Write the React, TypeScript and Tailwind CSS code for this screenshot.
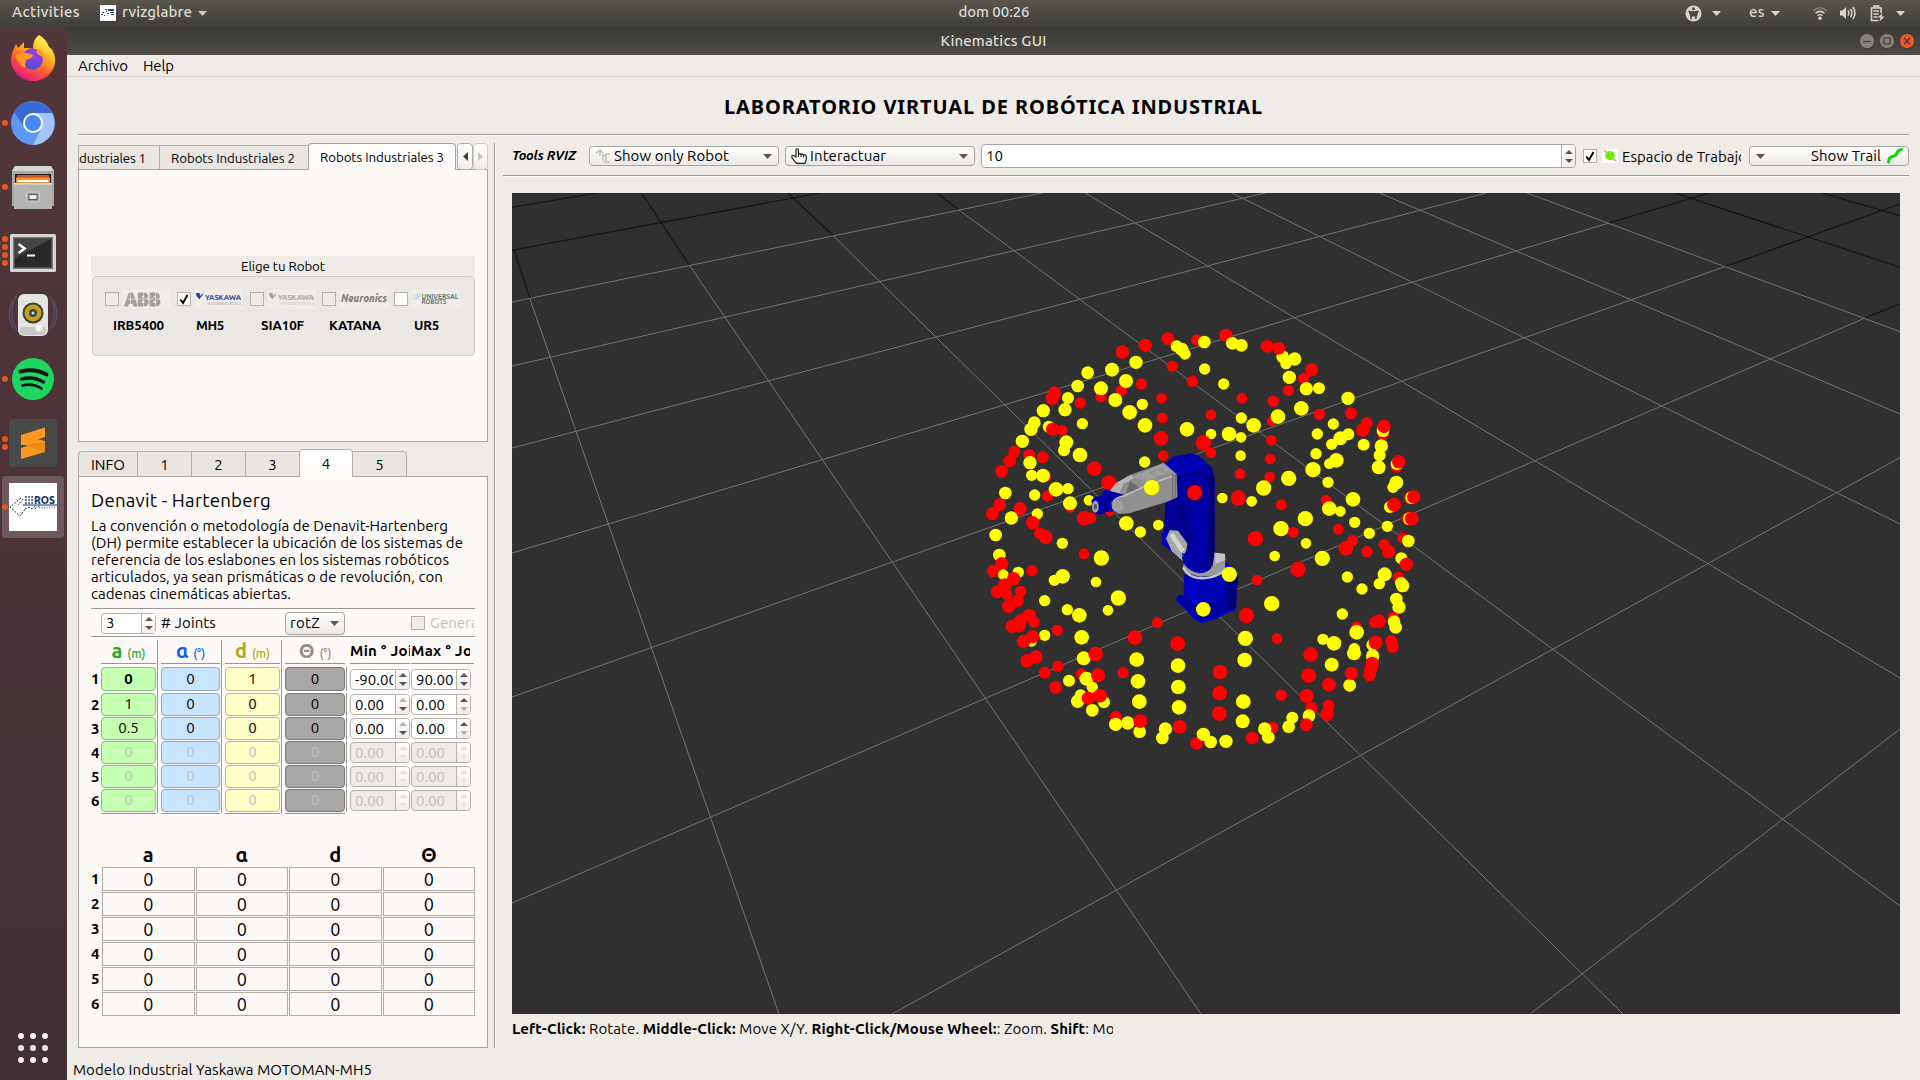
import React, { useLayoutEffect, useRef, useState } from "react";

/* Single line of text whose tracking is computed so that it spans `w` pixels. */
function Fit({ w, className = "", children }: { w: number; className?: string; children: React.ReactNode }) {
  const ref = useRef<HTMLSpanElement>(null);
  const [ls, setLs] = useState(0);
  useLayoutEffect(() => {
    const el = ref.current;
    if (!el) return;
    const n = (el.textContent || "").length;
    if (n > 0) setLs((w - el.getBoundingClientRect().width) / n);
  }, [w]);
  return (
    <span ref={ref} className={"inline-block whitespace-pre " + className} style={{ letterSpacing: ls }}>
      {children}
    </span>
  );
}

function Caret({ className = "" }: { className?: string }) {
  return (
    <svg width="9" height="5" viewBox="0 0 9 5" className={"shrink-0 " + className}>
      <path d="M0 0H9L4.5 5Z" fill="currentColor" />
    </svg>
  );
}

/* ---------- top bars ---------- */

function TopBar() {
  return (
    <header className="grid h-[27px] shrink-0 grid-cols-3 items-center bg-linear-to-b from-[#58554c] to-[#403f3a] pb-[2px] text-[15px] font-medium text-[#dfdbd2]">
      <div className="flex h-full items-center">
        <Fit w={68} className="ml-3">Activities</Fit>
        <svg width="16" height="16" viewBox="0 0 16 16" className="mt-px ml-5 shrink-0">
          <rect width="16" height="16" fill="#fff" />
          <path d="M5 4h2v1H5zM8 4h6v2H8zM10 7h4v1h-4zM6 6h1v1H6zM2 7h2v1H2zM1 9h2v1H1zM4 10h1v1H4zM7 8h2v1H7zM11 9h3v1h-3z" fill="#24446c" />
        </svg>
        <Fit w={70} className="ml-[6px]">rvizglabre</Fit>
        <Caret className="mt-px ml-[6px] text-[#cfccc4]" />
      </div>
      <div className="flex justify-center pl-[68px]">
        <Fit w={71}>dom 00:26</Fit>
      </div>
      <div className="flex h-full items-center justify-end pr-[15px] text-[#d8d5cd]">
        <svg width="17" height="17" viewBox="0 0 17 17" className="mt-px">
          <circle cx="8.5" cy="8.5" r="8" fill="currentColor" />
          <circle cx="8.5" cy="3.8" r="1.5" fill="#4a4840" />
          <path d="M3.5 6.2l3.6.8v3L5.9 14M13.500 6.200l-3.600.8v3l1.200 4M7.100 7h2.800v3.500H7.100z" fill="#4a4840" stroke="#4a4840" strokeWidth="1.300" strokeLinejoin="round" />
        </svg>
        <Caret className="mt-px ml-[10px]" />
        <Fit w={16} className="ml-[28px]">es</Fit>
        <Caret className="mt-px ml-[6px]" />
        <svg width="14" height="14" viewBox="0 0 14 14" className="mt-px ml-[33px]" fill="none" stroke="currentColor" strokeWidth="1.600">
          <path d="M.6 4.600a9 9 0 0 1 12.800 0" opacity=".4" />
          <path d="M2.600 7.200a6.200 6.200 0 0 1 8.800 0M4.600 9.700a3.400 3.400 0 0 1 4.800 0" />
          <circle cx="7" cy="12.200" r="1.700" fill="currentColor" stroke="none" />
        </svg>
        <svg width="16" height="14" viewBox="0 0 16 14" className="mt-px ml-[13px]" fill="none" stroke="currentColor" strokeWidth="1.500">
          <path d="M0 4.500h2.500L6 1v12L2.500 9.500H0z" fill="currentColor" stroke="none" />
          <path d="M8 4.500q1.600 2.500 0 5M10.500 2.800q2.700 4.200 0 8.400M13 1q3.800 6 0 12" />
        </svg>
        <svg width="15" height="17" viewBox="0 0 15 17" className="mt-px ml-[14px]" fill="none" stroke="currentColor" strokeWidth="1.600">
          <path d="M8.500 15.500H1.500V3H11V8M4 2.500V1h4.500v1.500M3.500 6h5.500M3.500 9h5M3.500 12h4" />
          <path d="M12.500 8L7.500 12.500h3L9.500 16.500l5-5h-3z" fill="currentColor" stroke="none" />
        </svg>
        <Caret className="mt-px ml-[11px]" />
      </div>
    </header>
  );
}

function TitleBar() {
  return (
    <div className="grid h-7 shrink-0 grid-cols-3 items-center bg-linear-to-b from-[#3b3a35] to-[#4d4b45] text-[15px] font-medium text-[#dfdbd2]">
      <span />
      <div className="flex justify-center"><Fit w={106}>Kinematics GUI</Fit></div>
      <div className="flex items-center justify-end gap-[4px] pr-[5px]">
        {["min", "max", "close"].map((k) => (
          <svg key={k} width="16" height="16" viewBox="0 0 16 16">
            <circle cx="8" cy="8" r="7.600" fill={k === "close" ? "#e9592c" : "#84827a"} stroke="#33322e" strokeWidth=".8" />
            <path
              d={k === "min" ? "M4.500 8.500h7" : k === "max" ? "M5 5h6v6H5z" : "M5.200 5l5.600 6M10.800 5l-5.600 6"}
              fill="none"
              stroke="#3c3b37"
              strokeWidth="1.200"
            />
          </svg>
        ))}
      </div>
    </div>
  );
}

/* ---------- dock ---------- */

function Firefox() {
  return (
    <svg width="46" height="47" viewBox="0 0 46 47" className="-mt-[3px]">
      <defs>
        <linearGradient id="ff" x1=".8" y1=".1" x2=".3" y2="1">
          <stop offset="0" stopColor="#fff44f" />
          <stop offset=".35" stopColor="#ffb01f" />
          <stop offset=".65" stopColor="#ff5634" />
          <stop offset="1" stopColor="#e31587" />
        </linearGradient>
        <radialGradient id="ffp" cx=".6" cy=".3" r=".8">
          <stop offset="0" stopColor="#a03ff0" />
          <stop offset="1" stopColor="#4a4fc4" />
        </radialGradient>
      </defs>
      <path d="M29 1c7 4 9 9 10 12 3 1 7 8 6 15-1 11-11 19-22 19S1 38 1 26c0-6 2-10 5-16l2 4 6-6 0 6c4 0 7 0 9 1 0-7 2-11 6-14z" fill="url(#ff)" />
      <circle cx="22.500" cy="25" r="10.500" fill="url(#ffp)" />
      <path d="M5 22c5-4 10-4 15-2 2 1 4 0 3 2-2 3-6 3-7 5-1 3-1 5 0 7C10 32 8 27 5 22zM27 15c5 1 9 5 8 11-1-3-4-4-6-5-3-2-3-4-2-6z" fill="#ff9a26" />
    </svg>
  );
}

function Chromium() {
  return (
    <svg width="44" height="44" viewBox="0 0 44 44">
      <circle cx="22" cy="22" r="22" fill="#5f97f3" />
      <path d="M3 11A22 22 0 0 1 41 12H22L12 24z" fill="#3869d4" />
      <path d="M41 12H22l9 14-9 18A22 22 0 0 0 41 12z" fill="#a3c3fb" />
      <circle cx="22" cy="22" r="10" fill="#fff" />
      <circle cx="22" cy="22" r="8" fill="#4587f3" />
    </svg>
  );
}

function Files() {
  return (
    <svg width="42" height="44" viewBox="0 0 42 44">
      <path d="M3 1h36l3 5v35H0V6z" fill="#a9a9a7" />
      <path d="M3 1h36l3 5H0z" fill="#d6d6d4" />
      <path d="M3 9h36v10H3z" fill="#221c18" />
      <path d="M5 10h32v3H5z" fill="#c9551f" />
      <path d="M4 12.500h34V19H4z" fill="#ee9338" />
      <path d="M6 15h30v2H6z" fill="#fff" />
      <path d="M2 18h38v26H2z" fill="#b4b4b2" />
      <path d="M2 18h38v1.500H2z" fill="#dcdcda" />
      <rect x="14.500" y="27" width="13" height="10" rx="1.500" fill="#a2a2a0" stroke="#cfcfcd" strokeWidth="1.200" />
      <rect x="17" y="29.500" width="8" height="5" fill="#eee" stroke="#555" />
    </svg>
  );
}

function Terminal() {
  return (
    <svg width="46" height="38" viewBox="0 0 46 38" className="mt-[3px]">
      <rect width="46" height="38" rx="1.500" fill="#d4d4d2" />
      <rect x="3" y="3" width="40" height="32" fill="#777" />
      <rect x="4.500" y="4.500" width="37" height="29" fill="#282828" />
      <path d="M5 5h36L5 24z" fill="#444" />
      <path d="M8.500 10l6 4.500-6 4.500" stroke="#fff" strokeWidth="2.600" fill="none" />
      <path d="M17 21.500h8" stroke="#fff" strokeWidth="2" />
    </svg>
  );
}

function Speaker() {
  return (
    <svg width="50" height="44" viewBox="0 0 50 44">
      <path d="M8 3q-9 17 1 35M4 8q-6 13 1 27M42 3q9 17-1 35M46 8q6 13-1 27" stroke="#5b6a93" strokeWidth="1.500" fill="none" opacity=".5" />
      <rect x="10" y="1" width="30" height="42" rx="6" fill="#e4e4e2" />
      <rect x="12" y="34" width="26" height="8" rx="3" fill="#c9c9c7" />
      <circle cx="25" cy="20" r="10.500" fill="#3a3c3c" />
      <circle cx="25" cy="20" r="8.500" fill="#c7a016" />
      <circle cx="25" cy="20" r="4" fill="#3e4650" />
      <circle cx="25" cy="20" r="1.500" fill="#ddd" />
      <circle cx="31" cy="35" r="3.500" fill="#f6f6f6" />
    </svg>
  );
}

function Spotify() {
  return (
    <svg width="42" height="42" viewBox="0 0 42 42" fill="none" stroke="#191414" strokeLinecap="round">
      <circle cx="21" cy="21" r="21" fill="#1ed760" stroke="none" />
      <path d="M8.500 13.500q14-3.500 26 3" strokeWidth="4" />
      <path d="M9.500 21q12-3 22 3" strokeWidth="3.300" />
      <path d="M10.500 27.500q10-2.500 19 2.800" strokeWidth="2.700" />
    </svg>
  );
}

function Sublime() {
  return (
    <svg width="48" height="48" viewBox="0 0 48 48">
      <rect width="48" height="48" rx="3" fill="#494949" />
      <path d="M12 29L36 22V33L12 40z" fill="#ff9820" />
      <path d="M12 16L36 24V33L12 25z" fill="#f08a15" />
      <path d="M12 16L36 8.500V18L12 26z" fill="#ff9820" />
      <path d="M12 26l24-3v-1l-12-3z" fill="#ff9820" />
    </svg>
  );
}

function RosLogo() {
  return (
    <svg width="48" height="48" viewBox="0 0 48 48">
      <rect width="48" height="48" fill="#fff" />
      <text x="25" y="20.500" fontSize="10" fontWeight="800" fill="#16365f" textLength="21" lengthAdjust="spacingAndGlyphs">ROS</text>
      <path d="M16 14h8M16 17h8M16 20h8" stroke="#16365f" strokeWidth="1.500" strokeDasharray="1.800 1.300" />
      <path d="M14 22h34" stroke="#16365f" />
      <path d="M12 15L1 24l10 9 5-7M14 16l-5 6M16 26l4-2 3 2 3-3M26 26l4-3" stroke="#16365f" fill="none" strokeDasharray="2 1.400" />
      <path d="M30 24.500h17" stroke="#7d93b3" strokeWidth="2" strokeDasharray="1 1.500" />
    </svg>
  );
}

const dock = [
  { icon: <Firefox />, n: 0 },
  { icon: <Chromium />, n: 1 },
  { icon: <Files />, n: 1 },
  { icon: <Terminal />, n: 4 },
  { icon: <Speaker />, n: 0 },
  { icon: <Spotify />, n: 1 },
  { icon: <Sublime />, n: 2 },
  { icon: <RosLogo />, n: 1 },
];

function Dock() {
  return (
    <nav className="flex w-[67px] shrink-0 flex-col bg-linear-to-b from-[#533639] via-[#4b3338] to-[#3e3034]">
      {dock.map((d, i) => (
        <div key={i} className="flex h-16 items-center">
          <div className={"ml-0.5 flex h-[62px] w-[62px] items-center rounded " + (i === 7 ? "bg-[#6e585d]" : "")}>
            <div className="flex w-[6px] shrink-0 flex-col gap-[2.300px]">
              {Array.from({ length: d.n }, (_, k) => (
                <span key={k} className="h-[6px] w-[6px] rounded-full bg-[#e95420]" />
              ))}
            </div>
            <div className="-ml-px flex w-[52px] shrink-0 justify-center">{d.icon}</div>
          </div>
        </div>
      ))}
      <div className="mt-auto mb-[17px] ml-[18px] grid w-[30px] grid-cols-3 gap-[6px]">
        {Array.from({ length: 9 }, (_, k) => (
          <span key={k} className="h-[6px] w-[6px] rounded-full bg-[#f2f0ee]" />
        ))}
      </div>
    </nav>
  );
}

/* ---------- small widgets ---------- */

function Check({ on = false, white = false }: { on?: boolean; white?: boolean }) {
  return (
    <span className={"flex h-[14px] w-[14px] shrink-0 items-center justify-center border border-[#b5b0ac] " + (on || white ? "bg-white" : "bg-[#efebe7]")}>
      {on && (
        <svg width="10" height="11" viewBox="0 0 10 11">
          <path d="M1.200 5.500L4 9 8.500 1" fill="none" stroke="#000" strokeWidth="2" />
        </svg>
      )}
    </span>
  );
}

function Arrows({ up = "#5a5753", down = "#5a5753" }: { up?: string; down?: string }) {
  return (
    <span className="flex h-full w-[14px] shrink-0 flex-col items-center justify-center gap-[5px] border-l border-[#b5b0ac] bg-linear-to-b from-white to-[#f0eeec]">
      <svg width="8" height="4" viewBox="0 0 8 4"><path d="M0 4h8L4 0z" fill={up} /></svg>
      <svg width="8" height="4" viewBox="0 0 8 4"><path d="M0 0h8L4 4z" fill={down} /></svg>
    </span>
  );
}

function Etched({ className = "" }: { className?: string }) {
  return <div className={"h-[2px] shrink-0 border-t border-[#9a9691] bg-white " + className} />;
}

/* ---------- left: robot chooser ---------- */

function LogoYaskawa({ color, sub }: { color: string; sub: string }) {
  return (
    <svg width="48" height="20" viewBox="0 0 48 20" className="shrink-0">
      <rect width="48" height="20" fill="#f0ece9" />
      <path d="M1 4h3.500l.5 3 3-3-3.500 6.500L1.500 7zM5.500 6.500L8.500 4 6.500 8z" fill={color} />
      <text x="10" y="10.600" fontSize="8" fontWeight="500" fill={color} stroke={color} strokeWidth=".2" textLength="36" lengthAdjust="spacingAndGlyphs">YASKAWA</text>
      <text x="12" y="16" fontSize="3.600" fill={sub} textLength="34" lengthAdjust="spacingAndGlyphs">MOTOMAN ROBOTICS</text>
    </svg>
  );
}

const robots = [
  {
    name: "IRB5400", w: 51, col: "w-[72px]", lab: "pl-[8px]",
    logo: (
      <svg width="48" height="20" viewBox="0 0 48 20" className="shrink-0">
        <rect width="48" height="20" fill="#f0ece9" />
        <text x="1.500" y="17" fontSize="19" fontWeight="900" fill="#a09e9c" stroke="#a09e9c" strokeWidth="1.200" textLength="36" lengthAdjust="spacingAndGlyphs">ABB</text>
        <path d="M0 10h38M7.500 2v16M20.500 2v16M32.500 2v16" stroke="#f0ece9" strokeWidth=".6" />
      </svg>
    ),
  },
  { name: "MH5", w: 28, col: "w-[73px]", lab: "pl-[19px]", logo: <LogoYaskawa color="#2d3c9e" sub="#9aa0bb" />, on: true },
  { name: "SIA10F", w: 43, col: "w-[72px]", lab: "pl-[11px]", logo: <LogoYaskawa color="#a5a3a2" sub="#c2c0be" /> },
  {
    name: "KATANA", w: 52, col: "w-[72px]", lab: "pl-[7px]",
    logo: (
      <svg width="48" height="20" viewBox="0 0 48 20" className="shrink-0">
        <rect width="48" height="20" fill="#f0ece9" />
        <text x="1" y="13" fontSize="10.500" fontStyle="italic" fontWeight="800" fill="#77787a" textLength="46" lengthAdjust="spacingAndGlyphs">Neuronics</text>
      </svg>
    ),
  },
  {
    name: "UR5", w: 25, col: "w-[70px]", lab: "pl-[20px]", white: true,
    logo: (
      <svg width="48" height="20" viewBox="0 0 48 20" className="shrink-0">
        <rect width="48" height="20" fill="#f0ece9" />
        <path d="M2 5v5h3V5M6 10V5h2v3H6" stroke="#c5dbe4" strokeWidth="1.300" fill="none" />
        <text x="9.500" y="9.700" fontSize="6.800" fontWeight="700" fill="#6b7476" textLength="37" lengthAdjust="spacingAndGlyphs">UNIVERSAL</text>
        <text x="9.500" y="15.200" fontSize="6.800" fontWeight="700" fill="#6b7476" textLength="25" lengthAdjust="spacingAndGlyphs">ROBOTS</text>
      </svg>
    ),
  },
];

function RobotTabs() {
  return (
    <section className="flex h-[299px] w-[410px] shrink-0 flex-col">
      <div className="relative z-10 flex h-[26px] shrink-0 items-end text-[13.33px]">
        <div className="flex h-[24px] w-[82px] items-center overflow-hidden border-t border-r border-l border-[#b5b0ac] bg-[#e9e5e1] pt-[2px]">
          <Fit w={67}>dustriales 1</Fit>
        </div>
        <div className="flex h-[24px] w-[148px] items-center border-t border-[#b5b0ac] bg-[#e9e5e1] pt-[2px] pl-[11px]">
          <Fit w={124}>Robots Industriales 2</Fit>
        </div>
        <div className="-mb-px flex h-[27px] w-[148px] items-center rounded-t border border-b-0 border-[#a8a39e] bg-linear-to-b from-white to-[#fdf9f6] pt-[2px] pl-[11px]">
          <Fit w={124}>Robots Industriales 3</Fit>
        </div>
        <div className="-mb-px ml-[1px] flex h-[27px] w-[16px] items-center justify-center rounded-sm border border-[#b5b0ac] bg-linear-to-b from-white to-[#efedeb]">
          <svg width="5" height="9" viewBox="0 0 5 9"><path d="M5 0v9L0 4.500z" fill="#3c3b37" /></svg>
        </div>
        <div className="-mb-px flex h-[27px] w-[15px] items-center justify-center rounded-sm border border-[#cfcac6] bg-linear-to-b from-white to-[#efedeb]">
          <svg width="5" height="9" viewBox="0 0 5 9"><path d="M0 0v9l5-4.500z" fill="#c8c4c0" /></svg>
        </div>
      </div>
      <div className="flex-1 border border-[#a8a39e] bg-[#fdf9f6] px-3 pt-[86px]">
        <div className="flex h-5 w-[384px] items-center justify-center bg-[#efebe7] pt-[2px] text-[13.33px]">
          <Fit w={84}>Elige tu Robot</Fit>
        </div>
        <div className="ml-px h-20 w-[383px] rounded-sm border border-[#d2cdc9] bg-[#ebe7e3] pt-[12px] pl-[12px]">
          <div className="flex">
            {robots.map((r) => (
              <div key={r.name} className={r.col}>
                <div className="flex h-5 items-center gap-[4px]">
                  <Check on={r.on} white={r.white} />
                  {r.logo}
                </div>
                <div className={"mt-[7px] text-[13.33px] leading-5 font-bold " + r.lab}>
                  <Fit w={r.w}>{r.name}</Fit>
                </div>
              </div>
            ))}
          </div>
        </div>
      </div>
    </section>
  );
}

/* ---------- left: Denavit-Hartenberg ---------- */

const lines: [string, number][] = [
  ["La convención o metodología de Denavit-Hartenberg", 357],
  ["(DH) permite establecer la ubicación de los sistemas de", 372],
  ["referencia de los eslabones en los sistemas robóticos", 358],
  ["articulados, ya sean prismáticas o de revolución, con", 352],
  ["cadenas cinemáticas abiertas.", 200],
];

const dhRows = [
  { v: ["0", "0", "1", "0"], min: "-90.00", max: "90.00", mu: "#5a5753", xd: "#5a5753" },
  { v: ["1", "0", "0", "0"], min: "0.00", max: "0.00", mu: "#b5b0ac", xd: "#b5b0ac" },
  { v: ["0.5", "0", "0", "0"], min: "0.00", max: "0.00", mu: "#b5b0ac", xd: "#b5b0ac" },
  { v: ["0", "0", "0", "0"], off: true },
  { v: ["0", "0", "0", "0"], off: true },
  { v: ["0", "0", "0", "0"], off: true },
];

const cellStyle = [
  "w-[55px] bg-[#c5ffb1] border-[#8fb884]",
  "w-[59px] bg-[#c9e4ff] border-[#8fa9c2]",
  "w-[55px] bg-[#ffffc8] border-[#b9b98c]",
  "w-[60px] bg-[#a8a8a8] border-[#777777]",
];

const headStyle = [
  { s: "a", u: "(m)", c: "w-[55px] text-[#1faa1f]" },
  { s: "α", u: "(°)", c: "w-[59px] text-[#0a5ef0]" },
  { s: "d", u: "(m)", c: "w-[55px] text-[#adab0a]" },
  { s: "Θ", u: "(°)", c: "w-[60px] text-[#8c8c8c]" },
];

/* Etched vertical rule in the gap between two columns. */
function Rule({ className = "" }: { className?: string }) {
  return <div className={"mr-[2px] ml-px w-[2px] shrink-0 self-stretch border-l border-[#9a9691] bg-white " + className} />;
}

function SpinCell({ value, off, up, down }: { value: string; off?: boolean; up?: string; down?: string }) {
  return (
    <div className={"mr-px flex h-[21px] w-[60px] shrink-0 items-center overflow-hidden rounded-sm border border-[#b5b0ac] " + (off ? "bg-[#efebe7] text-[#c3bfbb]" : "bg-white")}>
      <span className="w-[44px] shrink-0 pl-[4px]">
        <span className="block w-[38px] overflow-hidden leading-[19px] whitespace-nowrap">{value}</span>
      </span>
      <Arrows up={off ? "#e4e1de" : up} down={off ? "#e4e1de" : down} />
    </div>
  );
}

function DhTabs() {
  return (
    <section className="mt-[7px] flex h-[599px] w-[410px] shrink-0 flex-col">
      <div className="relative z-10 flex h-[27px] shrink-0 items-end text-[15px]">
        {["INFO", "1", "2", "3", "4", "5"].map((t, i) => (
          <div
            key={t}
            className={
              "flex items-center justify-center border-t border-[#b5b0ac] pt-[2px] " +
              (i === 0 ? "h-[25px] w-[59px] rounded-tl border-l bg-[#e9e5e1]" : i === 4 ? "-mb-px h-[28px] w-[54px] rounded-t border-x bg-linear-to-b from-white to-[#fdf9f6]" : i === 5 ? "h-[25px] w-[54px] rounded-tr border-r bg-[#e9e5e1]" : "h-[25px] w-[54px] border-l bg-[#e9e5e1]")
            }
          >
            {i === 0 ? <Fit w={34}>{t}</Fit> : t}
          </div>
        ))}
      </div>
      <div className="flex flex-1 flex-col border border-[#a8a39e] bg-[#fdf9f6] pl-3">
        <h2 className="mt-[10px] h-7 shrink-0 text-[18.67px] leading-7"><Fit w={180}>Denavit - Hartenberg</Fit></h2>
        <div className="h-[93px] shrink-0 pt-[2px] text-[15px] leading-[17px]">
          {lines.map(([t, w]) => (
            <div key={t} className="h-[17px]"><Fit w={w}>{t}</Fit></div>
          ))}
        </div>
        <Etched className="w-[384px]" />
        <div className="flex h-[26px] w-[384px] shrink-0 items-center overflow-hidden pl-[10px] text-[15px]">
          <div className="flex h-[21px] w-[55px] shrink-0 items-center rounded-sm border border-[#b5b0ac] bg-white">
            <span className="w-[39px] pl-[4px]">3</span>
            <Arrows />
          </div>
          <Fit w={55} className="mt-px ml-[5px]"># Joints</Fit>
          <div className="ml-[69px] flex h-[23px] w-[60px] shrink-0 items-center rounded-sm border border-[#a8a39e] bg-linear-to-b from-white to-[#ebe9e6] pl-[4px]">
            <Fit w={30}>rotZ</Fit>
            <Caret className="ml-[10px] text-[#5a5753]" />
          </div>
          <span className="ml-[66px]"><Check /></span>
          <span className="mt-px ml-[5px] w-[44px] overflow-hidden whitespace-nowrap text-[#c3bfbb]">General</span>
        </div>
        <Etched className="w-[384px]" />

        <div className="flex h-[26px] w-[390px] shrink-0 items-start pt-[2px] pl-[10px]">
          {headStyle.map((h, i) => (
            <React.Fragment key={h.s}>
              <div className={"flex h-[24px] shrink-0 items-baseline justify-center gap-[5px] border-b border-[#9a9691] " + h.c}>
                <b className="text-[20px] leading-[22px]">{h.s}</b>
                <span className="text-[12px] font-medium">{h.u}</span>
              </div>
              <Rule className={i === 3 ? "opacity-0" : "-mb-[4px]"} />
            </React.Fragment>
          ))}
          <div className="mr-px h-[24px] w-[60px] shrink-0 overflow-hidden border-b border-[#9a9691] text-[15px] leading-[21px] font-bold tracking-[.3px] whitespace-nowrap">Min ° Joint</div>
          <div className="h-[24px] w-[63px] shrink-0 border-b border-[#9a9691] text-[15px] leading-[21px] font-bold tracking-[.3px] whitespace-nowrap">
            <span className="block w-[59px] overflow-hidden">Max ° Joint</span>
          </div>
        </div>

        <div className="mt-[3px] flex shrink-0 flex-col gap-px text-[15px]">
          {dhRows.map((r, i) => (
            <div key={i} className={"flex items-center " + (i === 0 ? "mb-px h-[24px]" : "h-[23px]")}>
              <b className="w-[10px] shrink-0 leading-5">{i + 1}</b>
              {r.v.map((v, k) => (
                <React.Fragment key={k}>
                  <div
                    className={"flex h-full shrink-0 items-center justify-center rounded-sm border " + cellStyle[k] + " " + (r.off ? (k === 3 ? "text-[#bdbdbd]" : "text-[#c3bfbb]") : "") + (i === 0 && k === 0 ? " font-bold" : "")}
                  >
                    {v}
                  </div>
                  <Rule className={k === 3 ? "" : "-my-px"} />
                </React.Fragment>
              ))}
              <SpinCell value={r.min || "0.00"} off={r.off} up={r.mu} />
              <SpinCell value={r.max || "0.00"} off={r.off} down={r.xd} />
            </div>
          ))}
        </div>
        <div className="mt-px flex shrink-0 pl-[10px]">
          {["w-[55px]", "w-[59px]", "w-[55px]", "w-[60px]"].map((w, i) => (
            <div key={i} className={"mr-[5px] h-px bg-[#9a9691] " + w} />
          ))}
        </div>

        <div className="mt-[28px] grid h-[25px] w-[384px] shrink-0 grid-cols-4 gap-px pl-[11px] text-center text-[20px] leading-[25px] font-bold">
          {["a", "α", "d", "Θ"].map((h) => <span key={h}>{h}</span>)}
        </div>
        <div className="flex shrink-0 flex-col gap-px">
          {[1, 2, 3, 4, 5, 6].map((n) => (
            <div key={n} className="flex h-6 w-[384px] items-center">
              <b className="w-[11px] shrink-0 text-[15px]">{n}</b>
              <div className="grid h-6 flex-1 grid-cols-4 gap-px">
                {[0, 1, 2, 3].map((k) => (
                  <div key={k} className="flex items-center justify-center border border-[#b0aba7] text-[18px] leading-none">0</div>
                ))}
              </div>
            </div>
          ))}
        </div>
      </div>
    </section>
  );
}

/* ---------- right: toolbar ---------- */

const combo = "flex h-5 shrink-0 items-center rounded-sm border border-[#a8a39e] bg-linear-to-b from-white to-[#ebe9e6]";

function Toolbar() {
  return (
    <div className="flex h-[32px] shrink-0 items-center pb-[6px] pl-[9px] text-[15px]">
      <Fit w={64} className="text-[13.33px] font-bold italic">Tools RVIZ</Fit>
      <div className={combo + " ml-[13px] w-[190px] pl-[6px]"}>
        <svg width="15" height="14" viewBox="0 0 15 14" fill="none" stroke="#c2c2c0" strokeWidth="1.600">
          <path d="M0 4l4-3 3 3M4 2v5M7 12V6l3 1M10 13V5h4M8 13h6" />
        </svg>
        <Fit w={115} className="mt-px ml-[3px]">Show only Robot</Fit>
        <Caret className="mr-[6px] ml-auto text-[#5a5753]" />
      </div>
      <div className={combo + " ml-[6px] w-[190px] pl-[5px]"}>
        <svg width="17" height="16" viewBox="0 0 17 16">
          <path d="M5 9V2q0-1.300 1.200-1.300T7.400 2v4q2-.8 2.600.4 2-.7 2.500.6 2.500-.4 2.700 1.200V12l-1.200 3.400H5.500L1 10V7.500q1.500-1 4 1.500z" fill="#fff" stroke="#111" strokeWidth="1.100" />
          <path d="M7.400 6v3M10 6.500v2.700M12.600 7v2.500" stroke="#111" />
        </svg>
        <Fit w={76} className="mt-px ml-[2px]">Interactuar</Fit>
        <Caret className="mr-[6px] ml-auto text-[#5a5753]" />
      </div>
      <div className="ml-[6px] flex h-[24px] w-[595px] shrink-0 items-center overflow-hidden rounded-sm border border-[#a8a39e] bg-white">
        <span className="mt-px flex-1 pl-[4px]">10</span>
        <Arrows />
      </div>
      <span className="ml-[7px]"><Check on /></span>
      <svg width="16" height="14" viewBox="0 0 16 14" className="ml-[5px] shrink-0">
        <rect width="16" height="14" fill="#fff" />
        <path d="M2 1l12 11" stroke="#f3a58a" strokeWidth="2" />
        <ellipse cx="8" cy="6.500" rx="4.800" ry="4.500" fill="#6cf000" />
      </svg>
      <span className="mt-[2px] ml-[4px] w-[119px] shrink-0 overflow-hidden whitespace-nowrap">Espacio de Trabajo</span>
      <div className={combo + " ml-[8px] w-[160px] pl-[6px]"}>
        <Caret className="text-[#5a5753]" />
        <Fit w={70} className="mt-px ml-auto">Show Trail</Fit>
        <svg width="16" height="16" viewBox="0 0 16 16" className="mr-[5px] ml-[6px]">
          <path d="M1.500 14q.5-5 4-5.500t4.500-3.500 4.500-3.500" fill="none" stroke="#08d808" strokeWidth="3" strokeLinecap="round" />
        </svg>
      </div>
    </div>
  );
}

/* ---------- right: 3D scene ---------- */

type Seg = [number, number, number, number];

const gridLight: Seg[] = [
  [18, 106, 267, 821], [178, 73, 689, 821], [321.5, 43, 1111, 821], [447, 17, 1388, 713], [573, 0, 1388, 485],
  [720, 0, 1388, 331], [867.6, 0, 1388, 221], [1015, 0, 1388, 138.7],
  [0, 109, 530, 0], [0, 173, 753.5, 0], [0, 255, 974, 0], [0, 360, 1097, 30], [0, 504, 1212.6, 73.7],
  [0, 710, 1353, 125], [380, 821, 1388, 264.6], [1018, 821, 1388, 536],
];
const gridDark: Seg[] = [
  [2, 57, 18, 106], [129.5, 0, 178, 73], [276, 0, 321.5, 43], [425, 0, 447, 17], [1163, 0, 1388, 74.3], [1310, 0, 1388, 22.7],
  [0, 14.3, 85, 0], [0, 57.3, 308, 0], [1097, 30, 1197, 0], [1212.6, 73.7, 1388, 11], [1353, 125, 1388, 111],
];

/* Sampled workspace points, four quadrants; "R" or "Y", then x, y, radius in thirds of a pixel. */
const q1 =
  "R427,96,20 R496,76,20 R564,56,19 R651,60,17 Y673,66,19 Y590,79,18 Y605,88,20 Y615,102,17 Y674,147,17 R577,139,17 R637,184,17 Y468,127,20 Y396,149,21 Y323,158,19 R424,211,17 Y438,183,21 R484,192,17 Y293,198,19 R363,230,17 Y363,205,21 R224,218,19 R217,235,20 Y264,234,18 R301,249,17 Y406,240,21 Y487,253,17 R545,235,16 Y190,272,20 Y255,269,20 Y449,277,22 R547,294,16 Y307,311,17 Y495,316,22 Y621,328,22 Y163,308,19 Y153,328,20 Y206,320,18 R246,331,16 R218,328,20 R543,355,22 Y127,364,20 Y252,391,18 Y259,367,21 R103,396,18 R89,423,19 R65,454,19 R148,405,18 Y150,428,20 R188,412,18 Y300,405,22 R550,407,16 R343,446,22 Y494,426,17 R201,472,12 Y155,466,17 Y189,467,21 R387,489,23 Y76,519,19 Y164,525,17 R203,528,17 Y228,508,22 Y264,506,17 R59,554,19 R37,581,19 R120,566,20 R270,563,15 Y270,550,21 Y327,541,16 Y94,594,20 Y172,582,17 R158,608,20 R332,594,17 R313,595,22 R390,575,14 Y439,610,22 Y481,636,17 Y535,615,16 Y47,645,19 R180,640,18 R197,652,21 Y247,670,17";
const q2 =
  "R78,46,20 Y97,70,19 Y124,76,19 R202,79,19 Y248,110,19 Y258,131,17 Y284,117,20 R236,85,19 Y268,172,20 R311,175,17 R335,149,20 Y71,192,17 R265,211,17 Y319,206,20 Y357,205,18 R126,235,16 R220,244,17 Y304,265,22 Y444,235,20 R33,284,16 Y124,294,17 R216,303,16 Y234,290,22 R358,283,17 R453,280,18 R500,309,18 R488,330,20 R549,344,17 Y549,332,19 R552,319,20 Y33,342,16 R10,369,23 Y87,342,22 Y123,352,16 Y161,316,22 Y400,312,17 Y352,342,17 Y395,373,17 Y421,355,21 Y445,343,18 Y491,374,18 Y544,378,20 Y539,406,18 Y536,442,21 R33,398,16 R214,361,16 R211,417,16 Y122,407,16 Y348,401,17 Y409,421,22 Y388,431,16 R590,440,18 Y590,432,18 R596,425,20 Y339,449,23 Y266,475,23 R209,471,16 R120,461,16 Y191,504,23 Y384,487,17 Y579,502,17 Y589,488,21 Y67,534,16 R115,534,23 Y155,544,16 R244,554,16 R378,541,16 Y388,566,22 Y421,574,16 Y459,538,22 Y570,561,18 R582,554,21 R632,533,20 Y635,533,19 R641,531,20 R624,596,19 Y628,596,19 R635,596,21 Y243,626,23 Y316,596,23 R280,637,16 R415,628,16 Y464,607,17 Y508,640,17 Y562,619,17 R166,656,23 Y318,670,16 R457,662,17 R608,653,16 Y625,663,19";
const q3 =
  "Y58,45,19 R40,93,19 R65,71,20 Y70,104,16 Y115,97,17 R156,92,17 R312,41,16 Y364,54,23 R101,116,20 R74,135,20 Y248,109,22 Y223,121,17 Y348,126,16 R51,155,19 R80,163,17 R122,154,17 Y194,182,17 R86,199,20 R113,182,19 Y262,209,17 Y298,226,22 Y384,211,16 Y415,174,23 R148,226,20 R122,241,19 R162,246,17 R97,259,20 R118,258,19 R232,271,17 Y154,303,17 Y194,286,17 R131,304,20 R158,290,20 Y305,292,22 R465,293,22 R532,248,16 R141,362,20 R168,351,20 R234,379,17 R194,398,18 Y311,355,21 R347,342,22 Y267,422,18 R227,442,19 R304,402,17 Y319,416,21 R354,406,21 R429,398,17 Y470,359,22 Y474,424,22 Y594,377,22 R593,311,22 Y595,441,22 Y597,502,22 Y478,485,22 Y337,442,17 Y302,466,18 Y293,484,20 Y372,487,18 R325,475,20 R360,467,21 Y337,511,19 R407,531,18 Y407,553,20 Y443,549,20 Y479,575,19 R481,543,21 Y556,567,20 Y547,594,19 R599,561,21 R650,610,19 Y670,583,20";
const q4 =
  "Y224,48,16 Y367,55,23 R294,88,23 R171,120,16 R438,25,22 R501,35,17 R553,14,17 R566,35,20 Y604,55,18 R619,73,20 Y442,111,17 Y486,147,17 Y554,103,21 Y538,131,17 R595,112,17 Y603,129,18 Y608,137,20 Y427,222,17 Y215,191,23 Y589,177,19 Y597,201,20 R139,226,23 R580,232,17 Y582,245,19 Y587,262,19 R524,247,17 R536,244,21 R470,261,17 Y470,277,22 Y136,295,23 R231,296,16 Y369,298,17 Y402,310,22 Y517,315,18 R527,308,21 R574,303,18 R578,321,18 Y463,326,17 Y462,340,21 Y518,348,20 R517,370,20 R512,387,20 R509,405,19 Y134,360,22 R332,344,22 R326,407,22 Y395,374,21 R387,434,21 Y449,436,19 R454,400,20 R60,396,22 R59,459,22 R58,521,22 Y130,485,22 Y128,544,21 R244,466,17 R320,468,21 R334,503,18 R386,497,18 R381,523,20 Y327,527,19 R319,554,19 Y277,533,18 Y266,560,19 R218,563,17 Y194,567,20 Y205,592,19 R157,594,19 Y78,604,20 Y32,606,19";
const front = "Y515,503,23 R644,518,23 Y748,763,23 Y670,868,22";

function Dots({ data, dx = 0, dy = 0 }: { data: string; dx?: number; dy?: number }) {
  return (
    <>
      {data.split(" ").map((s, i) => {
        const [x, y, r] = s.slice(1).split(",").map(Number);
        return <circle key={i} cx={x + dx} cy={y + dy} r={r} fill={s[0] === "R" ? "#ff0000" : "#ffff00"} />;
      })}
    </>
  );
}

function RobotArm() {
  return (
    <g strokeLinejoin="round">
      {/* base */}
      <path d="M612 765L611 828 596 824 588 838 612 862 640 895 662 908 700 900 766 868 768 830 774 765 752 738 735 725z" fill="#0000b4" />
      <path d="M735 740L774 765 768 865 742 876 738 800z" fill="#00007c" />
      <path d="M611 828Q650 860 690 850T742 820L745 875 662 908 612 862 588 838 596 824z" fill="#0000a0" />
      <path d="M640 780V850" stroke="#0000dc" strokeWidth="14" />
      <path d="M588 838L612 862 662 908 766 868" fill="none" stroke="#0000d8" strokeWidth="4" />
      {/* turret collar */}
      <path d="M609 738Q620 765 662 770 715 770 736 745L735 702 706 698 620 715z" fill="#9a9a9a" />
      <path d="M609 742Q625 775 668 775 715 772 736 748" fill="none" stroke="#c9c9c9" strokeWidth="7" />
      <path d="M706 698L735 702 736 720 706 732z" fill="#c4c4c4" />
      {/* back link */}
      <path d="M556 540L594 528 640 560 640 700 590 690 545 668 552 640z" fill="#000094" />
      <path d="M545 640L572 630 590 690 612 722 590 708 545 672z" fill="#0000b8" />
      <path d="M558 655L570 630 594 632 632 684 612 726 575 694z" fill="#a6a6a6" />
      <path d="M574 642L608 694" stroke="#d4d4d4" strokeWidth="14" />
      {/* upper arm */}
      <path d="M556 432L584 408 606 410 625 400 650 404 668 416 680 430 697 445 704 478 704 690 698 735Q688 760 658 760 622 752 610 728L606 712 618 694 632 660 626 560 594 530 590 465z" fill="#0000a4" />
      <path d="M690 440L704 478 704 690 698 735 682 752 686 600z" fill="#000070" />
      <path d="M556 432L584 408 640 402 680 430 640 446 600 470z" fill="#0000bb" />
      <path d="M600 470Q640 450 680 474L690 500" fill="none" stroke="#000068" strokeWidth="4" />
      <path d="M592 415l12 10M620 405l16 16M650 410l8 14M600 440l20-8" stroke="#000070" strokeWidth="5" />
      <circle cx="644" cy="520" r="34" fill="#00008c" />
      <path d="M604 545Q600 600 632 640L622 690" fill="none" stroke="#000070" strokeWidth="6" />
      <path d="M660 560V720" stroke="#0000ae" strokeWidth="22" />
      <path d="M608 700Q620 752 664 752" fill="none" stroke="#0000d2" strokeWidth="5" />
      {/* wrist */}
      <path d="M334 542L345 530 362 528 378 506 402 510 432 524 428 545 400 552 398 576 382 574 362 584 342 580z" fill="#0000b2" />
      <path d="M362 528Q380 545 380 576M375 520Q395 530 398 550" fill="none" stroke="#000070" strokeWidth="6" />
      <ellipse cx="346" cy="560" rx="10" ry="18" fill="#a8a8a8" />
      <ellipse cx="346" cy="560" rx="5" ry="9" fill="#5c5c5c" />
      {/* forearm */}
      <path d="M390 512L408 490 452 464 550 429 590 462 592 532 560 546 448 580 415 582 396 566 394 545 432 524z" fill="#909090" />
      <path d="M390 512L408 490 452 464 462 474 430 492 418 520z" fill="#b4b4b4" />
      <path d="M460 470L550 429 582 456 496 484z" fill="#9d9d9d" />
      <path d="M438 520L450 482 482 506z" fill="#6c6c6c" />
      <path d="M400 545Q408 530 432 528L496 498 578 468" fill="none" stroke="#bcbcbc" strokeWidth="5" />
      <path d="M578 462V536M586 464V532" stroke="#6a6a6a" strokeWidth="3" />
      <path d="M512 458l30-12 20 16-28 10z" fill="none" stroke="#707070" strokeWidth="2" strokeDasharray="5 3" />
      <circle cx="414" cy="558" r="17" fill="#a0a0a0" />
    </g>
  );
}

function Viewport() {
  return (
    <svg width="1388" height="821" viewBox="0 0 1388 821" className="ml-[9px] shrink-0 bg-[#303030]">
      {gridDark.map(([a, b, c, d], i) => <line key={i} x1={a} y1={b} x2={c} y2={d} stroke="#141414" strokeWidth="1.100" />)}
      {gridLight.map(([a, b, c, d], i) => <line key={i} x1={a} y1={b} x2={c} y2={d} stroke="#727272" />)}
      <circle cx="707" cy="423.500" r="1.200" fill="#00a000" />
      <g transform="translate(468 127) scale(.33333)">
        <Dots data={q1} />
        <Dots data={q2} dx={660} />
        <Dots data={q3} dy={660} />
        <Dots data={q4} dx={660} dy={660} />
        <RobotArm />
        <Dots data={front} />
      </g>
    </svg>
  );
}

/* ---------- page ---------- */

export default function App() {
  return (
    <div className="flex h-[1080px] w-[1920px] flex-col overflow-hidden bg-[#efebe7] font-['Ubuntu','Noto_Sans',sans-serif] text-black">
      <TopBar />
      <div className="flex min-h-0 flex-1">
        <Dock />
        <div className="flex min-w-0 flex-1 flex-col">
          <div className="-ml-[67px] pl-[67px]"><TitleBar /></div>
          <div className="flex h-[22px] shrink-0 items-center border-b border-[#d6d1cc] pt-[1px] pl-[11px] text-[15px]">
            <Fit w={50}>Archivo</Fit>
            <Fit w={31} className="ml-[15px]">Help</Fit>
          </div>
          <div className="flex h-[57px] shrink-0 items-center justify-center pt-[3px]">
            <h1 className="font-['Noto_Sans',sans-serif] text-[20px] font-bold"><Fit w={539}>LABORATORIO VIRTUAL DE ROBÓTICA INDUSTRIAL</Fit></h1>
          </div>
          <Etched className="mr-[11px] ml-[11px]" />
          <div className="flex min-h-0 flex-1 pl-[11px]">
            <div className="flex w-[416px] shrink-0 flex-col pt-[7px]">
              <RobotTabs />
              <DhTabs />
            </div>
            <div className="mt-[7px] h-[905px] w-[2px] shrink-0 border-l border-[#9a9691] bg-white" />
            <div className="ml-[7px] flex w-[1406px] shrink-0 flex-col pt-[7px]">
              <Toolbar />
              <Etched />
              <div className="h-[16px] shrink-0" />
              <Viewport />
              <div className="ml-[9px] w-[601px] overflow-hidden pt-[4px] text-[15px] leading-[22px] tracking-[.1px] whitespace-nowrap">
                <b>Left-Click:</b> Rotate. <b>Middle-Click:</b> Move X/Y. <b>Right-Click/Mouse Wheel:</b>: Zoom. <b>Shift</b>: Move Z
              </div>
            </div>
          </div>
          <div className="-mt-[20px] flex h-[20px] shrink-0 items-center pt-[1px] pl-[6px] text-[15px]">
            <Fit w={299}>Modelo Industrial Yaskawa MOTOMAN-MH5</Fit>
          </div>
        </div>
      </div>
    </div>
  );
}
